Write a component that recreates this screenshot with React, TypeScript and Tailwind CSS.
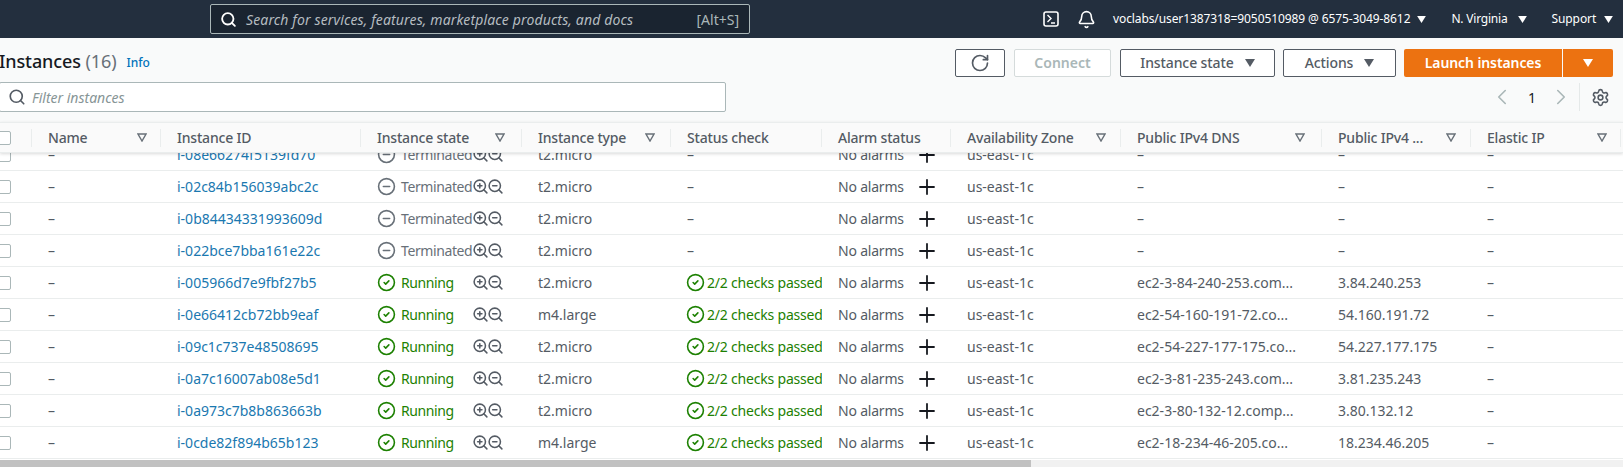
import React from 'react'
import { Bell, CircleCheck, CircleMinus, Plus, RotateCw, Search, Settings, ZoomIn, ZoomOut, ChevronLeft, ChevronRight } from 'lucide-react'

interface Row {
  id: string
  state: 'Terminated' | 'Running'
  type: string
  dns: string
  ip: string
}

const rows: Row[] = [
  { id: 'i-08e66274f5139fd70', state: 'Terminated', type: 't2.micro', dns: '–', ip: '–' },
  { id: 'i-02c84b156039abc2c', state: 'Terminated', type: 't2.micro', dns: '–', ip: '–' },
  { id: 'i-0b84434331993609d', state: 'Terminated', type: 't2.micro', dns: '–', ip: '–' },
  { id: 'i-022bce7bba161e22c', state: 'Terminated', type: 't2.micro', dns: '–', ip: '–' },
  { id: 'i-005966d7e9fbf27b5', state: 'Running', type: 't2.micro', dns: 'ec2-3-84-240-253.com...', ip: '3.84.240.253' },
  { id: 'i-0e66412cb72bb9eaf', state: 'Running', type: 'm4.large', dns: 'ec2-54-160-191-72.co...', ip: '54.160.191.72' },
  { id: 'i-09c1c737e48508695', state: 'Running', type: 't2.micro', dns: 'ec2-54-227-177-175.co...', ip: '54.227.177.175' },
  { id: 'i-0a7c16007ab08e5d1', state: 'Running', type: 't2.micro', dns: 'ec2-3-81-235-243.com...', ip: '3.81.235.243' },
  { id: 'i-0a973c7b8b863663b', state: 'Running', type: 't2.micro', dns: 'ec2-3-80-132-12.comp...', ip: '3.80.132.12' },
  { id: 'i-0cde82f894b65b123', state: 'Running', type: 'm4.large', dns: 'ec2-18-234-46-205.co...', ip: '18.234.46.205' },
]

const gridCols = 'grid grid-cols-[32px_129px_200px_161px_149px_151px_129px_170px_201px_149px_150px]'

function Caret({ className }: { className?: string }) {
  return (
    <svg viewBox="0 0 10 8" className={className}>
      <path d="M0 0h10L5 8z" fill="currentColor" />
    </svg>
  )
}

function HeaderCell({ label, filter = true, right = 'pr-[13px]' }: { label: string; filter?: boolean; right?: string }) {
  return (
    <div className={`flex items-center justify-between pl-4 ${right} border-r border-[#eaeded] h-[18px]`}>
      <span className="font-medium tracking-[-0.2px] text-[#545b64] whitespace-nowrap">{label}</span>
      {filter && (
        <svg viewBox="0 0 10 9" className="w-[10px] h-[9px] text-[#687078]">
          <path d="M1 1h8L5 8z" fill="none" stroke="currentColor" strokeWidth="1.4" />
        </svg>
      )}
    </div>
  )
}

function Cell({ children }: { children?: React.ReactNode }) {
  return <div className="pl-4 flex items-center whitespace-nowrap overflow-hidden">{children}</div>
}

function Checkbox() {
  return <div className="w-[14px] h-[14px] ml-[-3px] rounded-[2px] border border-[#aab7b8] bg-white" />
}

function ToolButton({ children, width }: { children: React.ReactNode; width: string }) {
  return (
    <button className={`${width} h-[28px] flex items-center justify-center gap-[11px] bg-white border border-[#545b64] rounded-[2px] font-medium tracking-[-0.1px] text-[#545b64]`}>
      {children}
      <Caret className="w-[10px] h-[8px]" />
    </button>
  )
}

export default function App() {
  return (
    <div className="w-[1623px] h-[467px] overflow-hidden flex flex-col bg-[#f9fafa] text-[14px] text-[#16191f] font-['Noto_Sans','Liberation_Sans',sans-serif]">
      <header className="h-[38px] shrink-0 bg-[#232f3e] flex items-center text-white">
        <div className="ml-[210px] w-[540px] h-[30px] bg-[#1a2430] border border-[#aab7b8] rounded-[2px] flex items-center pl-[9px] pr-[10px] text-[#aab7b8]">
          <Search size={17} strokeWidth={2.6} className="text-white" />
          <span className="ml-[9px] italic tracking-[0.14px] text-[#b5bcc0]">Search for services, features, marketplace products, and docs</span>
          <span className="ml-auto">[Alt+S]</span>
        </div>
        <svg viewBox="0 0 16 16" className="ml-[293px] w-[16px] h-[16px]">
          <rect x="1" y="1" width="14" height="14" rx="2" fill="none" stroke="white" strokeWidth="1.6" />
          <path d="M4.5 4l3.5 3.5-3.5 3.5M8 12h4" fill="none" stroke="white" strokeWidth="1.4" />
        </svg>
        <Bell size={19} strokeWidth={2} className="ml-[18px]" />
        <span className="ml-[17px] text-[12px] tracking-[-0.1px]">voclabs/user1387318=9050510989 @ 6575-3049-8612</span>
        <Caret className="ml-[7px] w-[9px] h-[7px]" />
        <span className="ml-[25px] text-[12px] tracking-[-0.2px]">N. Virginia</span>
        <Caret className="ml-[10px] w-[9px] h-[7px]" />
        <span className="ml-[25px] text-[12px] tracking-[-0.1px]">Support</span>
        <Caret className="ml-[8px] w-[9px] h-[7px]" />
      </header>

      <div className="flex items-center h-[43px] mt-[3px] pr-[10px]">
        <h1 className="ml-[-1px] mt-[-2px] text-[18px] font-medium tracking-[-0.1px] text-[#16191f] whitespace-nowrap">
          Instances <span className="font-normal text-[#687078]">(16)</span>
        </h1>
        <span className="ml-[10px] text-[12px] font-medium text-[#0073bb]">Info</span>
        <div className="ml-auto flex items-center gap-[8px]">
          <button className="w-[50px] h-[28px] mr-px flex items-center justify-center bg-white border border-[#545b64] rounded-[2px] text-[#545b64]">
            <RotateCw size={20} strokeWidth={2} />
          </button>
          <button className="w-[97px] h-[28px] mr-px bg-white border border-[#d5dbdb] rounded-[2px] font-semibold text-[#aab7b8]">Connect</button>
          <ToolButton width="w-[155px]">Instance state</ToolButton>
          <ToolButton width="w-[113px]">Actions</ToolButton>
          <div className="flex gap-px">
            <button className="w-[158px] h-[28px] bg-[#ec7211] rounded-l-[2px] font-semibold tracking-[-0.1px] text-white">Launch instances</button>
            <button className="w-[50px] h-[28px] bg-[#ec7211] rounded-r-[2px] flex items-center justify-center text-white">
              <Caret className="w-[10px] h-[8px]" />
            </button>
          </div>
        </div>
      </div>

      <div className="flex items-center h-[30px] mt-[-2px] pr-[13px]">
        <div className="ml-[-1px] w-[727px] h-[30px] flex items-center bg-white border border-[#aab7b8] rounded-[2px] pl-[8px]">
          <Search size={18} strokeWidth={2.2} className="text-[#545b64]" />
          <span className="ml-[6px] italic text-[#879596]">Filter instances</span>
        </div>
        <div className="ml-auto flex items-center text-[#aab7b8]">
          <ChevronLeft size={26} strokeWidth={1.5} />
          <span className="ml-[13px] mr-[12px] text-[#16191f]">1</span>
          <ChevronRight size={26} strokeWidth={1.5} />
          <div className="w-px h-[28px] bg-[#e5e9e9] ml-[5px] mr-[11px]" />
          <Settings size={19} strokeWidth={2} className="text-[#545b64]" />
        </div>
      </div>

      <div className={`${gridCols} h-[31px] mt-[10px] shrink-0 items-center bg-[#fafafa] border-y border-[#eaeded] shadow-[0_1px_3px_rgba(0,0,0,0.15)] relative z-10`}>
        <div className="flex items-center h-[18px] border-r border-[#eaeded]"><Checkbox /></div>
        <HeaderCell label="Name" />
        <HeaderCell label="Instance ID" filter={false} />
        <HeaderCell label="Instance state" right="pr-[16px]" />
        <HeaderCell label="Instance type" right="pr-[15px]" />
        <HeaderCell label="Status check" filter={false} />
        <HeaderCell label="Alarm status" filter={false} />
        <HeaderCell label="Availability Zone" right="pr-[14px]" />
        <HeaderCell label="Public IPv4 DNS" right="pr-[16px]" />
        <HeaderCell label="Public IPv4 ..." right="pr-[14px]" />
        <HeaderCell label="Elastic IP" />
      </div>

      <div className="flex-1 overflow-hidden bg-white">
        <div className="mt-[-14px]">
          {rows.map((row) => {
            const running = row.state === 'Running'
            return (
              <div key={row.id} className={`${gridCols} h-[32px] border-b border-[#eaeded] text-[#545b64]`}>
                <div className="flex items-center"><Checkbox /></div>
                <Cell>–</Cell>
                <Cell><span className="text-[#1a78b0]">{row.id}</span></Cell>
                <Cell>
                  {running ? <CircleCheck size={19} strokeWidth={2} className="shrink-0 text-[#1d8102]" /> : <CircleMinus size={19} strokeWidth={2} className="shrink-0 text-[#687078]" />}
                  <span className={`ml-[5px] w-[71px] shrink-0 tracking-[-0.4px] ${running ? 'text-[#1d8102]' : 'text-[#687078]'}`}>{row.state}</span>
                  <ZoomIn size={17} strokeWidth={2.2} className="shrink-0 text-[#545b64]" />
                  <ZoomOut size={17} strokeWidth={2.2} className="ml-[-2px] shrink-0 text-[#545b64]" />
                </Cell>
                <Cell>{row.type}</Cell>
                <Cell>
                  {running ? (
                    <>
                      <CircleCheck size={19} strokeWidth={2} className="ml-[-1px] shrink-0 text-[#1d8102]" />
                      <span className="ml-[2px] tracking-[-0.2px] text-[#1d8102]">2/2 checks passed</span>
                    </>
                  ) : '–'}
                </Cell>
                <Cell>
                  <span className="w-[77px] shrink-0 tracking-[-0.2px]">No alarms</span>
                  <Plus size={24} strokeWidth={1.8} className="shrink-0 text-[#16191f]" />
                </Cell>
                <Cell>us-east-1c</Cell>
                <Cell>{row.dns}</Cell>
                <Cell>{row.ip}</Cell>
                <Cell>–</Cell>
              </div>
            )
          })}
        </div>
      </div>

      <div className="h-[7px] shrink-0 bg-[#f1f1f1]">
        <div className="w-[1031px] h-full bg-[#c1c1c1]" />
      </div>
    </div>
  )
}
